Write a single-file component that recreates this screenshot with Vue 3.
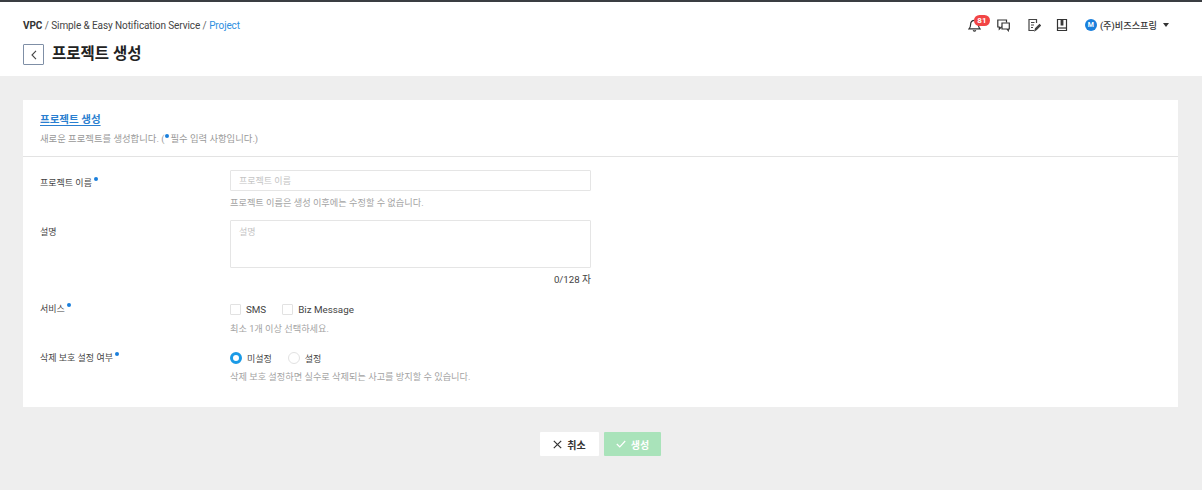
<script setup>
</script>

<template>
  <div class="page">
    <div class="topline"></div>
    <header class="header">
      <div class="header-top">
        <div class="crumbs">
          <b>VPC</b><span class="sep">/</span><span>Simple &amp; Easy Notification Service</span><span class="sep">/</span><span class="cur">Project</span>
        </div>
        <div class="tools">
          <div class="bell">
            <svg width="13" height="14" viewBox="0 0 13 14" fill="none" stroke="#333" stroke-width="1.2"><path d="M1 10.800h11c-1-1-1.600-2-1.600-4.300C10.400 4 8.800 2.300 6.500 2.300S2.600 4 2.600 6.500c0 2.300-.6 3.300-1.600 4.300z"/><path d="M5.100 12.400c.7.700 2.100.7 2.800 0"/></svg>
            <span class="badge">81</span>
          </div>
          <svg class="ico" width="13" height="14" viewBox="0 0 13 14" fill="none" stroke="#333" stroke-width="1.2"><path d="M9.500 4.500V2H.8v7h1.500v2l2-2H5"/><path d="M5 5h7.300v6h-1v1.500L10 11H5z"/></svg>
          <svg class="ico i2" width="14" height="14" viewBox="0 0 14 14" fill="none" stroke="#444" stroke-width="1.2"><path d="M9.500 5V1.500H2v11h5"/><path d="M4 4.500h3.500M4 7h3M4 9.500h2"/><path d="M8 12.500l.5-2 4-4 1 1-4 4z" fill="#444"/></svg>
          <svg class="ico i3" width="12" height="14" viewBox="0 0 12 14" fill="none" stroke="#333" stroke-width="1.2"><path d="M1.500 12.500V1.500h9v11z"/><path d="M1.500 10h9"/><path d="M5.200 1.500h1.600v5.500H5.200z" fill="#333"/></svg>
          <div class="user">
            <span class="avatar">M</span>
            <span class="uname">(주)비즈스프링</span>
            <span class="caret"></span>
          </div>
        </div>
      </div>
      <div class="title-row">
        <button class="back">
          <svg width="8" height="10" viewBox="0 0 8 10" fill="none" stroke="#444" stroke-width="1.100"><path d="M6 .8L2 5l4 4.200"/></svg>
        </button>
        <h1>프로젝트 생성</h1>
      </div>
    </header>

    <main class="main">
      <section class="card">
        <div class="card-head">
          <h2>프로젝트 생성</h2>
          <p>새로운 프로젝트를 생성합니다. (<i class="dot"></i>필수 입력 사항입니다.)</p>
        </div>
        <div class="form">
          <div class="row r-name">
            <label>프로젝트 이름<i class="dot"></i></label>
            <div class="field">
              <input class="input" placeholder="프로젝트 이름" />
              <p class="hint h-name">프로젝트 이름은 생성 이후에는 수정할 수 없습니다.</p>
            </div>
          </div>
          <div class="row r-desc">
            <label>설명</label>
            <div class="field">
              <textarea class="textarea" placeholder="설명"></textarea>
              <p class="count">0/128 자</p>
            </div>
          </div>
          <div class="row r-svc">
            <label>서비스<i class="dot"></i></label>
            <div class="field">
              <div class="opts">
                <span class="opt"><i class="check"></i>SMS</span>
                <span class="opt"><i class="check"></i>Biz Message</span>
              </div>
              <p class="hint h-svc">최소 1개 이상 선택하세요.</p>
            </div>
          </div>
          <div class="row r-del">
            <label>삭제 보호 설정 여부<i class="dot"></i></label>
            <div class="field">
              <div class="opts radios">
                <span class="opt"><i class="radio on"></i>미설정</span>
                <span class="opt"><i class="radio"></i>설정</span>
              </div>
              <p class="hint">삭제 보호 설정하면 실수로 삭제되는 사고를 방지할 수 있습니다.</p>
            </div>
          </div>
        </div>
      </section>
      <div class="actions">
        <button class="btn cancel">
          <svg width="9" height="9" viewBox="0 0 9 9" stroke="#333" stroke-width="1.200"><path d="M.8.800l7.400 7.400M8.200.800L.8 8.200"/></svg>
          취소
        </button>
        <button class="btn create">
          <svg width="10" height="8" viewBox="0 0 10 8" fill="none" stroke="#fff" stroke-width="1.200"><path d="M.8 4l3 3 5.400-6"/></svg>
          생성
        </button>
      </div>
    </main>
  </div>
</template>

<style>
html, body { margin: 0; padding: 0; background: #eeeeee; }
</style>

<style scoped>
.page {
  width: 1202px;
  height: 490px;
  overflow: hidden;
  background: #eeeeee;
  font-family: Roboto, "Noto Sans CJK KR", sans-serif;
  font-size: 10px;
  color: #333;
}
.topline { height: 2px; background: #3a3d42; }
.header { height: 74px; background: #fff; padding: 0 23px; box-sizing: border-box; }
.header-top { display: flex; justify-content: space-between; align-items: flex-start; padding: 16px 10px 0 0; height: 42px; box-sizing: border-box; }
.crumbs { font-size: 10px; letter-spacing: -0.1px; line-height: 14px; color: #444; display: flex; padding-top: 1px; }
.crumbs b { font-weight: 700; color: #333; }
.sep { margin: 0 2.500px; color: #666; }
.cur { color: #2e8fe0; }
.tools { display: flex; align-items: center; height: 14px; }
.bell { position: relative; width: 13px; height: 14px; margin-right: 16px; }
.bell svg { display: block; }
.badge {
  position: absolute; left: 6px; top: -3px; width: 16px; height: 11px; border-radius: 6px;
  background: #f24545; color: #fff; font-size: 8px; font-weight: 700; line-height: 11px; text-align: center;
}
.ico { display: block; }
.i2 { margin-left: 17px; }
.i3 { margin-left: 15px; }
.user { display: flex; align-items: center; margin-left: 17px; }
.avatar { width: 12px; height: 12px; border-radius: 50%; background: #1a7fdc; color: #fff; font-size: 7px; font-weight: 700; line-height: 12px; text-align: center; margin-right: 3px; }
.uname { font-size: 9.200px; font-weight: 500; color: #333; }
.caret { margin-left: 6px; border-left: 3px solid transparent; border-right: 3px solid transparent; border-top: 4px solid #333; }
.title-row { display: flex; align-items: center; }
.back { width: 21px; height: 21px; padding: 0; border: 1px solid #7f8fa6; border-radius: 1px; background: #fff; display: flex; align-items: center; justify-content: center; box-sizing: border-box; }
h1 { margin: 0 0 0 8px; font-size: 15.500px; font-weight: 700; color: #222; line-height: 21px; }
.main { padding: 24px 24px 0 23px; }
.card { background: #fff; height: 307px; width: 1155px; }
.card-head { height: 57px; border-bottom: 1px solid #e3e3e3; padding: 13px 17px 0; box-sizing: border-box; }
h2 { margin: 0; font-size: 10.500px; font-weight: 700; color: #2a7fd0; line-height: 14px; text-decoration: underline; text-underline-offset: 2px; }
.card-head p { margin: 5px 0 0; font-size: 9.350px; line-height: 13px; color: #999; }
.dot { display: inline-block; width: 4px; height: 4px; border-radius: 50%; background: #1a7fdc; vertical-align: 4px; margin: 0 1px; }
.form { padding-top: 13px; }
.row { display: flex; padding-left: 17px; }
.row label { width: 190px; font-size: 9px; color: #444; line-height: 13px; flex-shrink: 0; }
.r-name label { padding-top: 7px; }
.r-desc label { padding-top: 6px; }
.r-svc label { padding-top: 1px; }
.r-del label { padding-top: 1px; }
.row label .dot { margin-left: 2px; vertical-align: 5px; }
.field { width: 361px; }
.input { display: block; width: 361px; height: 21px; box-sizing: border-box; border: 1px solid #e5e5e5; border-radius: 1px; padding: 0 8px; font: 9px Roboto, "Noto Sans CJK KR", sans-serif; outline: none; }
.textarea { display: block; width: 361px; height: 48px; box-sizing: border-box; border: 1px solid #e5e5e5; border-radius: 1px; padding: 5px 8px; font: 9px/13px Roboto, "Noto Sans CJK KR", sans-serif; resize: none; outline: none; }
.input::placeholder, .textarea::placeholder { color: #c4c4c4; }
.hint { margin: 5px 0 0; font-size: 9.200px; line-height: 13px; color: #a3a3a3; }
.h-name { margin-top: 5px; }
.h-svc { margin-top: 6px; }
.count { margin: 5px 0 0; font-size: 9.700px; line-height: 13px; text-align: right; color: #444; }
.r-desc { margin-top: 11px; }
.r-svc { margin-top: 16px; }
.r-del { margin-top: 16px; }
.opts { display: flex; align-items: center; height: 14px; font-size: 9.800px; color: #444; }
.opt { display: flex; align-items: center; margin-right: 16px; }
.check { width: 11px; height: 11px; border: 1px solid #e2e2e2; border-radius: 1px; margin-right: 5px; box-sizing: border-box; }
.radio { width: 12px; height: 12px; border: 1px solid #e2e2e2; border-radius: 50%; margin-right: 5px; box-sizing: border-box; }
.radio.on { border: 3.500px solid #1a9ae6; background: #fff; }
.radios { font-size: 9px; }
.actions { display: flex; justify-content: center; gap: 5px; margin-top: 25px; }
.btn { height: 24px; border: 0; border-radius: 1px; padding: 0; font: 700 10px Roboto, "Noto Sans CJK KR", sans-serif; display: flex; align-items: center; justify-content: center; gap: 5px; }
.cancel { width: 59px; background: #fff; color: #333; }
.create { width: 57px; background: #a9e3ba; color: #fff; }
</style>
